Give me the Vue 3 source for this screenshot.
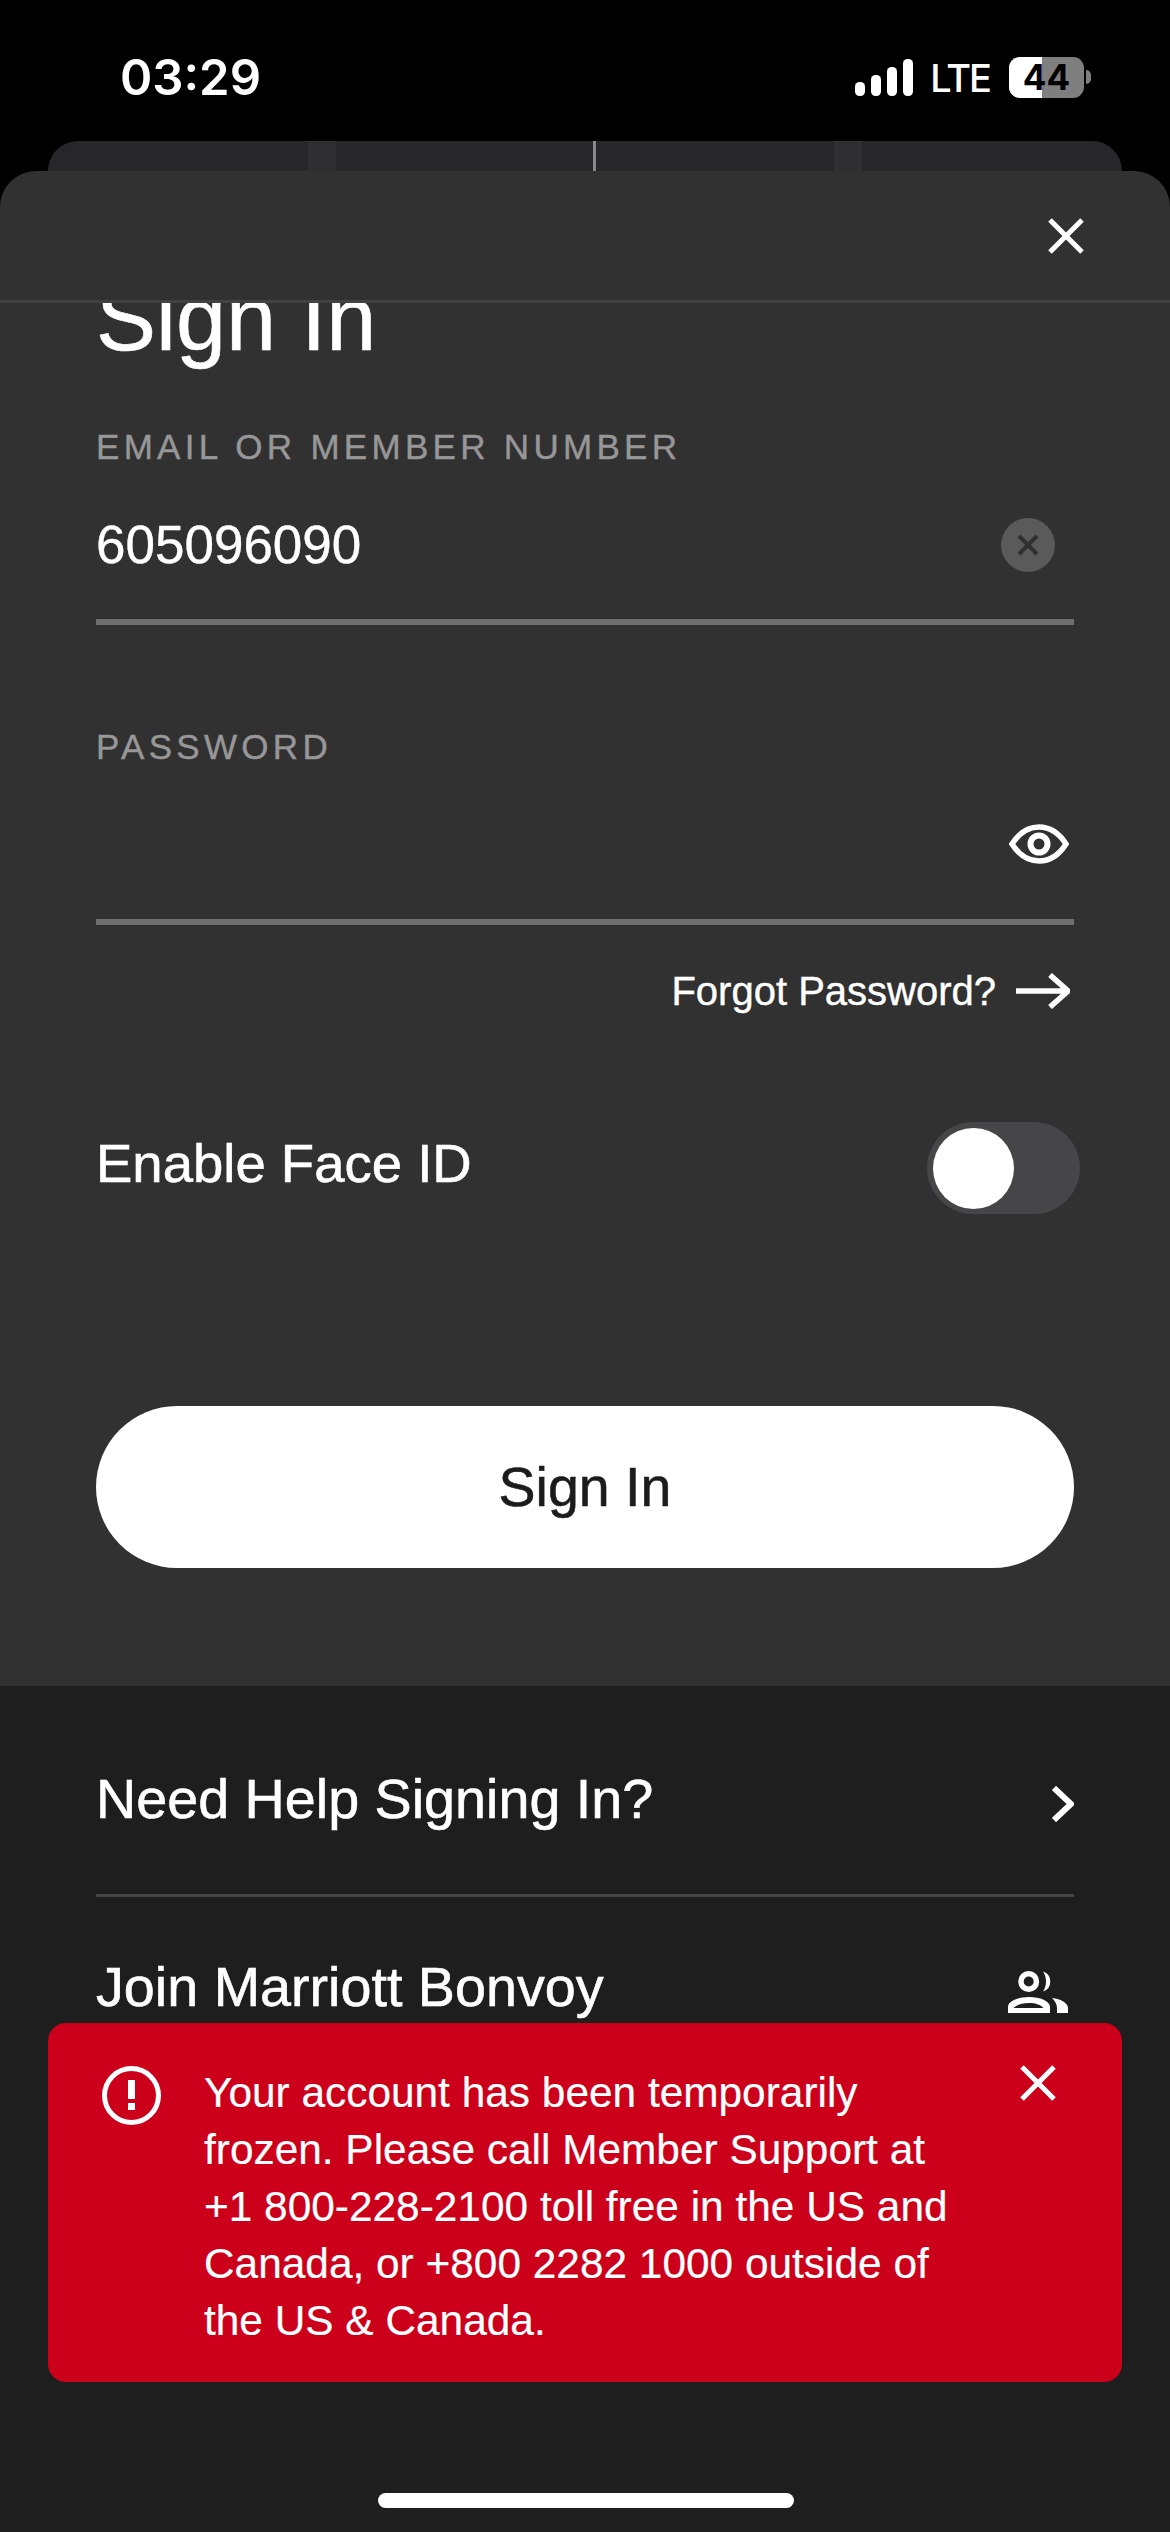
<template>
  <div class="phone">
    <!-- status bar -->
    <div class="status-bar">
      <span class="time">03:29</span>
      <div class="status-right">
        <svg class="signal" width="58" height="37" viewBox="0 0 58 37">
          <rect x="0" y="23" width="10" height="14" rx="4.5" fill="#fff" />
          <rect x="16" y="16" width="10" height="21" rx="4.5" fill="#fff" />
          <rect x="32" y="8" width="10" height="29" rx="4.5" fill="#fff" />
          <rect x="48" y="0" width="10" height="37" rx="4.5" fill="#fff" />
        </svg>
        <span class="lte">LTE</span>
        <div class="battery">
          <div class="battery-fill"></div>
          <span class="battery-num">44</span>
          <div class="battery-cap"></div>
        </div>
      </div>
    </div>

    <!-- card behind the sheet -->
    <div class="peek">
      <div class="peek-cell"></div>
      <div class="peek-gap"></div>
      <div class="peek-cell"></div>
      <div class="peek-line"></div>
      <div class="peek-cell"></div>
      <div class="peek-gap"></div>
      <div class="peek-cell"></div>
    </div>

    <!-- sign in sheet -->
    <div class="sheet">
      <div class="sheet-header">
        <svg class="sheet-close" width="36" height="36" viewBox="0 0 36 36">
          <path d="M2 2L34 34M34 2L2 34" stroke="#fff" stroke-width="5" fill="none" />
        </svg>
      </div>
      <div class="sheet-body">
        <h1 class="title">Sign In</h1>

        <label class="field-label">EMAIL OR MEMBER NUMBER</label>
        <div class="field">
          <span class="field-value">605096090</span>
          <div class="clear-btn">
            <svg width="24" height="24" viewBox="0 0 24 24">
              <path d="M3 3L21 21M21 3L3 21" stroke="#303030" stroke-width="4" fill="none" />
            </svg>
          </div>
        </div>

        <label class="field-label password-label">PASSWORD</label>
        <div class="field password-field">
          <svg class="eye" width="60" height="40" viewBox="0 0 60 40">
            <path d="M3 20C10 9 19 3 30 3C41 3 50 9 57 20C50 31 41 37 30 37C19 37 10 31 3 20Z" stroke="#fff" stroke-width="5.5" fill="none" />
            <circle cx="30" cy="20" r="8.5" stroke="#fff" stroke-width="6" fill="none" />
          </svg>
        </div>

        <div class="forgot">
          <span>Forgot Password?</span>
          <svg width="54" height="36" viewBox="0 0 54 36">
            <path d="M0 18H51M34 2L52 18L34 34" stroke="#fff" stroke-width="5.5" fill="none" />
          </svg>
        </div>

        <div class="face-row">
          <span class="face-label">Enable Face ID</span>
          <div class="toggle"><div class="toggle-knob"></div></div>
        </div>

        <button class="submit">Sign In</button>
      </div>
    </div>

    <!-- links under the sheet -->
    <div class="links">
      <div class="link-row with-line">
        <span>Need Help Signing In?</span>
        <svg class="chevron" width="22" height="36" viewBox="0 0 22 36">
          <path d="M2 2L19 18L2 34" stroke="#fff" stroke-width="6" fill="none" />
        </svg>
      </div>
      <div class="link-row">
        <span>Join Marriott Bonvoy</span>
        <svg class="people" width="60" height="42" viewBox="0 0 60 42">
          <circle cx="20.7" cy="10.5" r="7.75" stroke="#fff" stroke-width="5.5" fill="none" />
          <path d="M35 0.5A10.5 10.5 0 0 1 35 20.5C39 15 39 6 35 0.5Z" fill="#fff" />
          <path fill-rule="evenodd" d="M0 42V36C0 30 10 26 21 26C32 26 42 30 42 36V42ZM5.5 37C8 34 14 32 21 32C28 32 33 34 35.5 37Z" fill="#fff" />
          <path d="M44 27C53 28 60 32 60 37V42H49V37C49 33 47 30 44 27Z" fill="#fff" />
        </svg>
      </div>
    </div>

    <!-- error toast -->
    <div class="toast">
      <svg class="toast-icon" width="59" height="59" viewBox="0 0 59 59">
        <circle cx="29.5" cy="29.5" r="27" stroke="#fff" stroke-width="5" fill="none" />
        <rect x="26" y="14" width="7" height="19" fill="#fff" />
        <rect x="26" y="37" width="7" height="7" fill="#fff" />
      </svg>
      <p class="toast-text">
        Your account has been temporarily<br />
        frozen. Please call Member Support at<br />
        +1 800-228-2100 toll free in the US and<br />
        Canada, or +800 2282 1000 outside of<br />
        the US &amp; Canada.
      </p>
      <svg class="toast-close" width="36" height="36" viewBox="0 0 36 36">
        <path d="M2 2L34 34M34 2L2 34" stroke="#fff" stroke-width="5" fill="none" />
      </svg>
    </div>

    <div class="home-bar"></div>
  </div>
</template>

<script setup>
</script>

<style>
html,
body {
  margin: 0;
  background: #000;
}
</style>

<style scoped>
.phone {
  position: relative;
  width: 1170px;
  height: 2532px;
  overflow: hidden;
  background: #000;
  font-family: "Liberation Sans", Arial, sans-serif;
  color: #fff;
  display: flex;
  flex-direction: column;
}

.status-bar {
  height: 141px;
  flex-shrink: 0;
  padding: 50px 79px 0 120px;
  box-sizing: border-box;
  display: flex;
  justify-content: space-between;
  align-items: flex-start;
}

.time {
  font-family: Inter, sans-serif;
  font-size: 49px;
  font-weight: 600;
  line-height: 56px;
}

.status-right {
  display: flex;
  align-items: center;
  gap: 19px;
  padding-top: 7px;
}

.signal {
  margin-right: -2px;
}

.lte {
  font-family: Inter, sans-serif;
  font-size: 38px;
  font-weight: 500;
  letter-spacing: -2px;
  line-height: 40px;
}

.battery {
  position: relative;
  width: 75px;
  height: 41px;
  margin-right: 7px;
  border-radius: 11px;
  background: #7f7f7f;
  display: flex;
  align-items: center;
  justify-content: center;
}

.battery-fill {
  position: absolute;
  left: 0;
  top: 0;
  bottom: 0;
  width: 33px;
  background: #fff;
  border-radius: 11px 0 0 11px;
}

.battery-num {
  position: relative;
  font-family: Inter, sans-serif;
  font-size: 35px;
  font-weight: 700;
  line-height: 41px;
  color: #000;
}

.battery-cap {
  position: absolute;
  right: -7px;
  top: 13px;
  width: 5px;
  height: 14px;
  background: #7f7f7f;
  border-radius: 0 6px 6px 0;
}

.peek {
  height: 30px;
  flex-shrink: 0;
  margin: 0 48px;
  border-radius: 30px 30px 0 0;
  overflow: hidden;
  display: grid;
  grid-template-columns: 260px 28px 257px 3px 238px 28px 260px;
}

.peek-cell {
  background: #272729;
}

.peek-gap {
  background: #2f2f31;
}

.peek-line {
  background: #8a8a8c;
}

.sheet {
  height: 1515px;
  flex-shrink: 0;
  background: #313131;
  border-radius: 36px 36px 0 0;
  display: flex;
  flex-direction: column;
}

.sheet-header {
  height: 132px;
  flex-shrink: 0;
  box-sizing: border-box;
  border-bottom: 3px solid #424242;
  padding: 47px 86px 0 0;
  display: flex;
  justify-content: flex-end;
  align-items: flex-start;
}

.sheet-body {
  flex: 1;
  overflow: hidden;
  padding: 0 96px;
}

.title {
  margin: -32px 0 0;
  font-size: 90px;
  font-weight: 400;
  line-height: 96px;
  -webkit-text-stroke: 0.6px #fff;
}

.field-label {
  display: block;
  margin-top: 60px;
  font-size: 35px;
  line-height: 40px;
  letter-spacing: 4.3px;
  color: #979797;
  -webkit-text-stroke: 0.4px #979797;
}

.password-label {
  margin-top: 102px;
}

.field {
  height: 158px;
  box-sizing: border-box;
  border-bottom: 6px solid #6f6f6f;
  display: flex;
  align-items: center;
  justify-content: space-between;
  padding-top: 4px;
}

.field-value {
  font-size: 53px;
  line-height: 60px;
  -webkit-text-stroke: 0.4px #fff;
}

.clear-btn {
  width: 54px;
  height: 54px;
  margin-right: 19px;
  border-radius: 50%;
  background: #5a5a5a;
  display: flex;
  align-items: center;
  justify-content: center;
}

.password-field {
  justify-content: flex-end;
  padding-right: 5px;
  padding-bottom: 3px;
}

.forgot {
  margin-top: 42px;
  display: flex;
  justify-content: flex-end;
  align-items: center;
  gap: 20px;
  padding-right: 4px;
  font-size: 40px;
  line-height: 48px;
  -webkit-text-stroke: 0.4px #fff;
}

.face-row {
  margin-top: 107px;
  display: flex;
  justify-content: space-between;
  align-items: center;
  margin-right: -6px;
}

.face-label {
  font-size: 54.5px;
  line-height: 60px;
  padding-bottom: 8px;
  -webkit-text-stroke: 0.6px #fff;
}

.toggle {
  width: 153px;
  height: 92px;
  border-radius: 46px;
  background: #464648;
  box-sizing: border-box;
  padding: 6px;
}

.toggle-knob {
  width: 81px;
  height: 81px;
  border-radius: 50%;
  background: #fff;
}

.submit {
  display: block;
  width: 100%;
  height: 162px;
  margin-top: 192px;
  border: none;
  border-radius: 81px;
  background: #fff;
  color: #1c1c1c;
  font-family: "Liberation Sans", Arial, sans-serif;
  font-size: 55.5px;
  -webkit-text-stroke: 0.6px #1c1c1c;
}

.links {
  flex: 1;
  background: #1e1e1e;
  padding: 0 96px;
}

.link-row {
  box-sizing: border-box;
  display: flex;
  justify-content: space-between;
  align-items: flex-start;
  font-size: 55.7px;
  line-height: 68px;
  -webkit-text-stroke: 0.6px #fff;
  padding-top: 56px;
}

.with-line {
  height: 211px;
  padding-top: 79px;
  border-bottom: 3px solid #454545;
}

.chevron {
  margin-top: 21px;
}

.people {
  margin-top: 18px;
  margin-right: 6px;
}

/* floats over the link list */
.toast {
  position: absolute;
  left: 48px;
  right: 48px;
  top: 2023px;
  height: 359px;
  box-sizing: border-box;
  background: #cc001b;
  border-radius: 18px;
  padding: 43px 40px 0 54px;
  display: flex;
  align-items: flex-start;
}

.toast-icon {
  flex-shrink: 0;
}

.toast-text {
  flex: 1;
  margin: -2px 0 0 43px;
  font-size: 42.4px;
  line-height: 57px;
  -webkit-text-stroke: 0.2px #fff;
}

.toast-close {
  flex-shrink: 0;
  margin-right: 26px;
  margin-top: -1px;
}

.home-bar {
  position: absolute;
  left: 378px;
  top: 2493px;
  width: 416px;
  height: 15px;
  border-radius: 8px;
  background: #fff;
}
</style>
